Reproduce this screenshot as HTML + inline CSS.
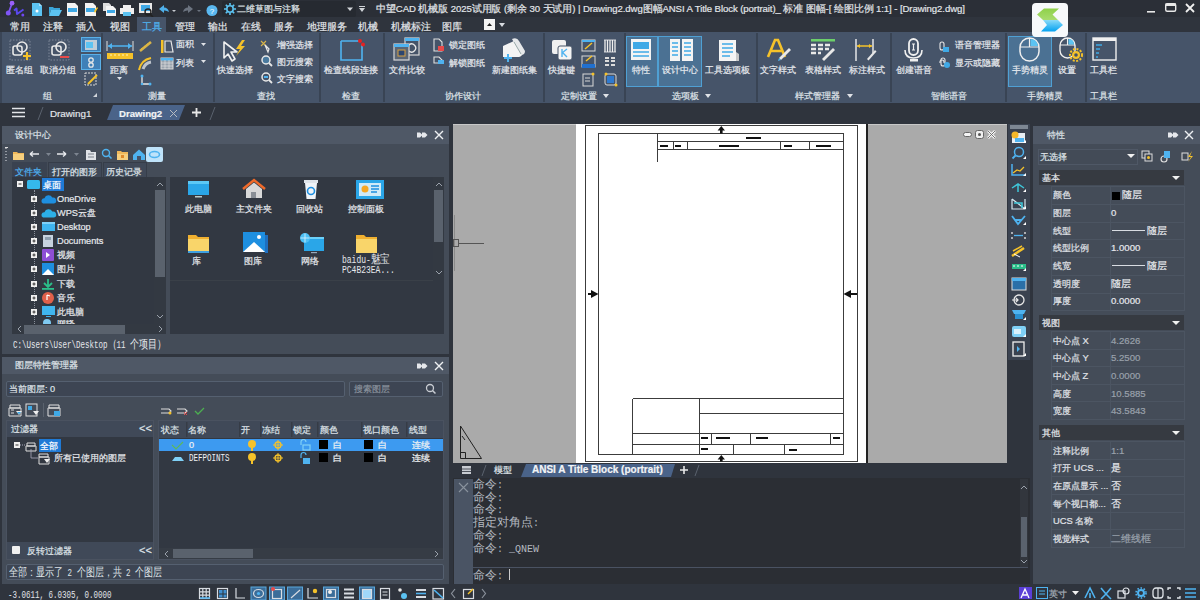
<!DOCTYPE html>
<html><head><meta charset="utf-8">
<style>
*{margin:0;padding:0;box-sizing:border-box}
html,body{width:1200px;height:600px;overflow:hidden;background:#2f343d;font-family:"Liberation Sans",sans-serif;color:#e6e8eb;position:relative;-webkit-text-stroke:0.2px currentColor}
.a{position:absolute}
.t{position:absolute;white-space:nowrap;font-size:9.2px;line-height:12px}
#title{left:0;top:0;width:1200px;height:17px;background:#2b2f37}
.tab{top:21px;color:#e2e5e9;font-size:10px}
#ribbon{left:0;top:32px;width:1200px;height:71px;background:#465469}
#doctabs{left:0;top:103px;width:1200px;height:21px;background:#2f343d}
.sep{position:absolute;top:33px;width:2px;height:69px;background:#394454}
.hl{background:#4b7193;border:1px solid #4fa0d4}
.glabel{position:absolute;top:90px;font-size:9.2px;line-height:12px;color:#dfe3e8;white-space:nowrap}
.blabel{position:absolute;top:64px;font-size:9.2px;line-height:12px;color:#e6e9ee;white-space:nowrap}
.slabel{position:absolute;font-size:9.2px;line-height:12px;color:#e6e9ee;white-space:nowrap}
.panel{position:absolute;background:#444c58}
.phead{position:absolute;background:#4f5866;height:18px}
.tree{color:#e6e8ec}
.fl{color:#e6e8ec}
.lh{top:424px;color:#dfe3e8}
.lr{color:#f0f2f4}
.cmd{font-family:"Liberation Mono",monospace;font-size:10px;line-height:12.7px;color:#b4b9c0;white-space:nowrap}
.cmd .c{font-size:12px;font-family:"Liberation Serif",serif}
.cmd,.ss{-webkit-text-stroke:0}
.ss{font-family:"Liberation Mono",monospace;font-size:10px;transform:scaleX(.75);transform-origin:0 0}
.ss .cj{font-size:12px}
.sech{position:absolute;left:1039px;width:145px;height:15px;background:#363a41;font-size:9.4px;line-height:15px;padding-left:3px;color:#e6e8ec}
.pn{position:absolute;left:1053px;font-size:9.4px;line-height:12px;color:#e0e3e8;white-space:nowrap}
.pv{position:absolute;left:1111px;font-size:9.6px;line-height:12px;color:#e6e8ec;white-space:nowrap}
.pv.g{color:#9aa1ab}
</style></head><body>
<!-- ===== TITLE BAR ===== -->
<div id="title" class="a"></div>
<svg class="a" style="left:0;top:0" width="30" height="18" viewBox="0 0 30 18">
 <path d="M12 3.5 L8.5 13" stroke="#7f55f5" stroke-width="1.8" fill="none"/>
 <circle cx="12" cy="3.2" r="2.4" fill="#9a60fa"/><circle cx="8.3" cy="13" r="2.5" fill="#7f55f5"/>
 <path d="M14 10.5 L16.5 8.5 L17 14 L23.5 9.5" stroke="#5a48ee" stroke-width="2" fill="none" stroke-linejoin="round"/>
 <circle cx="22.8" cy="15" r="1.5" fill="#7048f0"/>
</svg>
<!-- qat icons -->
<svg class="a" style="left:31px;top:2px" width="170" height="15" viewBox="0 0 170 15">
 <path d="M1 1h7l3 3v10H1z" fill="#5cc3f2"/><path d="M8 1v3h3" fill="#a6e0fb"/><circle cx="6" cy="9" r="1.5" fill="#fff"/>
 <path d="M18 5h4l1 1h6v2h-9l-2 6z" fill="#3aa4d8"/><path d="M20 8h11l-3 6H18z" fill="#5cc3f2"/>
 <path d="M36 1h8l3 3v10H36z" fill="#f4f4f4"/><rect x="37" y="6" width="9" height="4" fill="#3fa9e6"/>
 <path d="M54 1h8l3 3v10H54z" fill="#f4f4f4"/><rect x="55" y="6" width="9" height="4" fill="#3fa9e6"/><path d="M63 9l3-4 1 1-3 5z" fill="#f5c22a"/>
 <path d="M72 1h6l2 2v6h-8z" fill="#ddd"/><path d="M75 4h7l3 3v7H75z" fill="#f4f4f4"/><rect x="76" y="8" width="8" height="3" fill="#3fa9e6"/>
 <path d="M92 3h8v3h-8z" fill="#f0f0f0"/><path d="M89 6h14v6H89z" fill="#f0f0f0"/><rect x="92" y="10" width="8" height="4" fill="#5cc3f2"/>
 <rect x="108" y="1" width="13" height="10" fill="#e8e8e8"/><rect x="110" y="3" width="9" height="6" fill="#3fa9e6"/><circle cx="117" cy="10" r="3" stroke="#222" stroke-width="1.4" fill="none"/><path d="M119 12l3 3" stroke="#222" stroke-width="1.6"/>
</svg>
<svg class="a" style="left:155px;top:3px" width="65" height="14" viewBox="0 0 65 14">
 <path d="M4 6 L9 2 L9 4.5 Q13 4.5 14 9 Q11 7 9 7.5 L9 10z" fill="#4fb0ea"/>
 <path d="M17 7l2 2 2-2z" fill="#c8ccd2"/>
 <path d="M38 6 L33 2 L33 4.5 Q29 4.5 28 9 Q31 7 33 7.5 L33 10z" fill="#6c7480"/>
 <path d="M42 7l2 2 2-2z" fill="#6c7480"/>
 <circle cx="57" cy="7.5" r="5.5" fill="#5ab8f0"/><text x="57" y="10.5" font-size="8" fill="#fff" text-anchor="middle" font-family="Liberation Sans">?</text>
</svg>
<div class="a" style="left:222px;top:1px;width:134px;height:16px;background:#262a31;border-radius:2px"></div>
<svg class="a" style="left:224px;top:3px" width="12" height="12" viewBox="0 0 12 12"><circle cx="6" cy="6" r="3.2" stroke="#5cc3f2" stroke-width="1.6" fill="none"/><path d="M6 0v2.3M6 9.7V12M0 6h2.3M9.7 6H12M1.8 1.8l1.6 1.6M8.6 8.6l1.6 1.6M1.8 10.2l1.6-1.6M8.6 3.4l1.6-1.6" stroke="#5cc3f2" stroke-width="1.6"/></svg>
<div class="t" style="left:237px;top:3px;color:#dfe2e6">二维草图与注释</div>
<svg class="a" style="left:346px;top:5px" width="24" height="9" viewBox="0 0 24 9"><path d="M1 2.5h6l-3 3.5z" fill="#d0d3d8"/><path d="M13 3h6l-3 4z" fill="#d0d3d8"/><rect x="13" y="1" width="6" height="1" fill="#d0d3d8"/></svg>
<div class="t" id="ttl" style="left:376px;top:3px;color:#e2e5e9;font-size:9.6px;letter-spacing:-0.09px">中望CAD 机械版 2025试用版 (剩余 30 天试用) | Drawing2.dwg图幅ANSI A Title Block (portrait)_ 标准 图幅-[ 绘图比例 1:1] - [Drawing2.dwg]</div>
<!-- window controls -->
<svg class="a" style="left:1140px;top:2px" width="60" height="14" viewBox="0 0 60 14">
 <rect x="7" y="9" width="8" height="1.6" fill="#e8e8e8"/>
 <rect x="25.7" y="1.7" width="10" height="7.5" rx="1.5" stroke="#e8e8e8" stroke-width="1.4" fill="none"/><rect x="25.5" y="1.5" width="10.5" height="2.5" fill="#e8e8e8"/>
 <path d="M46 2l8 8M54 2l-8 8" stroke="#f0f0f0" stroke-width="1.8"/>
</svg>
<!-- floating app icon -->
<div class="a" style="left:1032px;top:3px;width:36px;height:34px;background:#f7f9fb;border-radius:4px;z-index:10"></div>
<svg class="a" style="left:1032px;top:0px;z-index:11" width="36" height="36" viewBox="1032 0 36 36">
 <defs><linearGradient id="gg" x1="0" y1="0" x2="0" y2="1"><stop offset="0" stop-color="#8fd14a"/><stop offset="1" stop-color="#a8dc6e"/></linearGradient>
 <linearGradient id="bg" x1="0" y1="0" x2="0" y2="1"><stop offset="0" stop-color="#8adaf8"/><stop offset=".45" stop-color="#4cc0f5"/><stop offset="1" stop-color="#05a2f0"/></linearGradient></defs>
 <path d="M1044 8.5H1059L1052.5 14.5L1058 20H1043L1037 14.5z" fill="url(#gg)"/>
 <path d="M1043 20H1058L1063 25L1055 31.5H1041L1047 25z" fill="url(#bg)"/>
</svg>

<!-- ===== RIBBON TABS ===== -->
<div class="a" style="left:137px;top:17px;width:29px;height:16px;background:#465469"></div>
<div class="t tab" style="left:10px">常用</div>
<div class="t tab" style="left:43px">注释</div>
<div class="t tab" style="left:76px">插入</div>
<div class="t tab" style="left:110px">视图</div>
<div class="t tab" style="left:142px;color:#4fb3f0">工具</div>
<div class="t tab" style="left:175px">管理</div>
<div class="t tab" style="left:208px">输出</div>
<div class="t tab" style="left:241px">在线</div>
<div class="t tab" style="left:274px">服务</div>
<div class="t tab" style="left:307px">地理服务</div>
<div class="t tab" style="left:358px">机械</div>
<div class="t tab" style="left:391px">机械标注</div>
<div class="t tab" style="left:442px">图库</div>
<div class="a" style="left:484px;top:19px;width:11px;height:11px;background:#f4f4f4"></div>
<svg class="a" style="left:484px;top:19px" width="22" height="11"><path d="M3 7l2.5-3 2.5 3z" fill="#222"/><path d="M15 4h6l-3 4z" fill="#d8dbe0"/></svg>
<!-- ===== RIBBON ===== -->
<div id="ribbon" class="a"></div>
<div class="a" style="left:0;top:32px;width:2px;height:71px;background:#3a4556"></div>
<div class="sep" style="left:101px"></div>
<div class="sep" style="left:213px"></div>
<div class="sep" style="left:319px"></div>
<div class="sep" style="left:383px"></div>
<div class="sep" style="left:543px"></div>
<div class="sep" style="left:624px"></div>
<div class="sep" style="left:756px"></div>
<div class="sep" style="left:890px"></div>
<div class="sep" style="left:1005px"></div>
<div class="sep" style="left:1085px"></div>
<!-- highlight buttons -->
<div class="a hl" style="left:81px;top:37px;width:20px;height:15px;background:#3f80b8;border-color:#5ab0e8"></div>
<div class="a hl" style="left:81px;top:54px;width:20px;height:16px;background:#3f80b8;border-color:#5ab0e8"></div>
<div class="a hl" style="left:626px;top:36px;width:76px;height:51px"></div>
<div class="a" style="left:657px;top:37px;width:2px;height:49px;background:#4fa0d4"></div>
<div class="a hl" style="left:1008px;top:36px;width:44px;height:51px"></div>

<!-- group 组 -->
<svg class="a" style="left:8px;top:38px" width="90" height="50" viewBox="0 0 90 50">
 <rect x="2" y="2" width="20" height="20" stroke="#8a94a3" stroke-width="0.8" stroke-dasharray="1.5 1.5" fill="none"/>
 <rect x="5" y="8" width="9" height="9" rx="2" stroke="#e8e8e8" stroke-width="1.6" fill="none"/><circle cx="14" cy="9" r="5" stroke="#e8e8e8" stroke-width="1.6" fill="none"/>
 <path d="M19 14v8M15 18h8" stroke="#f5c22a" stroke-width="2.2"/>
 <rect x="41" y="2" width="20" height="20" stroke="#8a94a3" stroke-width="0.8" stroke-dasharray="1.5 1.5" fill="none"/>
 <rect x="44" y="8" width="9" height="9" rx="2" stroke="#e8e8e8" stroke-width="1.6" fill="none"/><circle cx="53" cy="9" r="5" stroke="#e8e8e8" stroke-width="1.6" fill="none"/>
 <rect x="52" y="18" width="9" height="2" fill="#e84a4a"/>
 <rect x="77" y="2" width="12" height="10" fill="#e0e0e0" opacity=".8"/><rect x="78" y="4" width="7" height="6" fill="#5cc3f2"/>
 <circle cx="83" cy="22" r="2.2" stroke="#e8e8e8" stroke-width="1.3" fill="none"/><circle cx="83" cy="27" r="2.2" stroke="#e8e8e8" stroke-width="1.3" fill="none"/>
 <rect x="77" y="35" width="11" height="12" stroke="#d8d8d8" stroke-width="1" fill="none" stroke-dasharray="2 1"/><path d="M80 46l9-9" stroke="#f5c22a" stroke-width="2"/>
</svg>
<div class="blabel" style="left:6px">匿名组</div>
<div class="blabel" style="left:40px">取消分组</div>
<div class="glabel" style="left:43px">组</div>
<svg class="a" style="left:92px;top:92px" width="6" height="6"><path d="M1 5h4V1z" fill="#d0d4da"/></svg>

<!-- group 测量 -->
<svg class="a" style="left:104px;top:38px" width="105" height="50" viewBox="0 0 105 50">
 <path d="M3 3v10M29 3v10" stroke="#e0e0e0" stroke-width="1"/><path d="M4 8h24" stroke="#4fb3f0" stroke-width="1.5"/><path d="M4 8l4-3v6zM28 8l-4-3v6z" fill="#4fb3f0"/>
 <rect x="3" y="15" width="26" height="6" fill="#f5c22a"/><path d="M7 16v2M11 16v2M15 16v2M19 16v2M23 16v2" stroke="#fff3c0" stroke-width="1"/>
 <path d="M36 13l11-9" stroke="#d8b44a" stroke-width="2.5"/><path d="M37 11l9-7" stroke="#f5c22a" stroke-width="1" stroke-dasharray="1 1"/>
 <path d="M35 32 Q37 22 47 20" stroke="#f5c22a" stroke-width="2" fill="none"/><path d="M39 31 Q41 25 47 24" stroke="#bfc5cc" stroke-width="3" fill="none"/>
 <path d="M38 38v8h8" stroke="#e8e8e8" stroke-width="1.3" fill="none"/><circle cx="38" cy="38" r="1.5" fill="#4fb3f0"/><circle cx="46" cy="46" r="1.5" fill="#4fb3f0"/><circle cx="38" cy="46" r="1.3" fill="#4fb3f0"/>
 <rect x="57" y="2" width="2.5" height="13" fill="#f5c22a"/><path d="M61 3h6l2 11h-8z" stroke="#e8e8e8" stroke-width="1.2" fill="none"/>
 <rect x="57" y="20" width="12" height="11" stroke="#d8d8d8" stroke-width="1" fill="#9aa3ad"/><rect x="57" y="20" width="12" height="2.5" fill="#4fb3f0"/><path d="M57 25h12M57 28h12M61 22v9M65 22v9" stroke="#e8e8e8" stroke-width=".6"/>
 <path d="M97 5h5l-2.5 3z" fill="#e0e3e8"/><path d="M97 22h5l-2.5 3z" fill="#e0e3e8"/>
 <path d="M13 39h5l-2.5 3z" fill="#e0e3e8"/>
</svg>
<div class="blabel" style="left:110px">距离</div>
<div class="slabel" style="left:176px;top:38px">面积</div>
<div class="slabel" style="left:176px;top:57px">列表</div>
<div class="glabel" style="left:148px">测量</div>

<!-- group 查找 -->
<svg class="a" style="left:221px;top:38px" width="95" height="50" viewBox="0 0 95 50">
 <path d="M3 4 L3 20 L7 16 L11 23 L14 21 L10 14 L16 14z" stroke="#f0f0f0" stroke-width="1.6" fill="#465469" stroke-linejoin="round"/>
 <path d="M21 2 L15 11 L19 11 L15 18 L24 8 L20 8 L24 2z" fill="#f5c22a"/>
 <path d="M40 3l5 5M45 3l-5 5" stroke="#d8b44a" stroke-width="1.1"/><path d="M44 7l4 4-1 3z" stroke="#e8e8e8" stroke-width="1.2" fill="none"/>
 <circle cx="45" cy="22" r="4" stroke="#e8e8e8" stroke-width="1.5" fill="#4fb3f0" fill-opacity=".4"/><path d="M48 25l3 3" stroke="#e8e8e8" stroke-width="1.8"/>
 <circle cx="45" cy="39" r="4" stroke="#e8e8e8" stroke-width="1.5" fill="none"/><path d="M43 39h4" stroke="#4fb3f0" stroke-width="2"/><path d="M48 42l3 3" stroke="#e8e8e8" stroke-width="1.8"/>
</svg>
<div class="blabel" style="left:217px">快速选择</div>
<div class="slabel" style="left:277px;top:39px">增强选择</div>
<div class="slabel" style="left:277px;top:56px">图元搜索</div>
<div class="slabel" style="left:277px;top:73px">文字搜索</div>
<div class="glabel" style="left:257px">查找</div>

<!-- group 检查 -->
<svg class="a" style="left:338px;top:38px" width="30" height="25" viewBox="0 0 30 25">
 <path d="M3 3h18M24 6v16H3V3" stroke="#4fb3f0" stroke-width="1.6" fill="none"/>
 <circle cx="22" cy="3" r="2" fill="#e82020"/><circle cx="25" cy="6.5" r="2" fill="#e82020"/>
</svg>
<div class="blabel" style="left:324px">检查线段连接</div>
<div class="glabel" style="left:342px">检查</div>

<!-- group 协作设计 -->
<svg class="a" style="left:390px;top:36px" width="145" height="28" viewBox="0 0 145 28">
 <rect x="15" y="2" width="14" height="17" stroke="#d8d8d8" stroke-width="1.2" fill="#465469"/><rect x="15" y="2" width="14" height="3" fill="#4fb3f0"/><path d="M19 9a4 4 0 1 1 0 6" stroke="#e8e8e8" stroke-width="1.3" fill="none"/>
 <rect x="4" y="8" width="15" height="16" stroke="#d8d8d8" stroke-width="1.2" fill="#5b6675"/><rect x="4" y="8" width="15" height="3" fill="#4fb3f0"/><rect x="8" y="14" width="7" height="6" stroke="#d8a040" stroke-width="1" fill="#2c4670"/>
 <path d="M44 3h5l3 3v9h-8z" stroke="#e0e0e0" stroke-width="1.1" fill="none"/><rect x="48" y="10" width="6" height="5" fill="#e84a4a"/>
 <path d="M44 21h5l3 3v3h-8z" stroke="#e0e0e0" stroke-width="1.1" fill="none"/><rect x="48" y="24" width="6" height="4" fill="#4fb3f0"/>
 <path d="M113 10 L124 5 L132 17 Q133 20 129 21 L113 21z" fill="#f4f4f4"/><path d="M122 3 Q127 1 129 5 L135 15 Q135 19 131 19z" fill="#e6e8ea"/><path d="M124 6 L131 18" stroke="#9aa" stroke-width="1" fill="none"/><path d="M118 18v8M114 22h8" stroke="#4fb3f0" stroke-width="2"/>
</svg>
<div class="blabel" style="left:389px">文件比较</div>
<div class="slabel" style="left:449px;top:39px">锁定图纸</div>
<div class="slabel" style="left:449px;top:57px">解锁图纸</div>
<div class="blabel" style="left:492px">新建图纸集</div>
<div class="glabel" style="left:445px">协作设计</div>

<!-- group 定制设置 -->
<svg class="a" style="left:549px;top:37px" width="72" height="50" viewBox="0 0 72 50">
 <rect x="3" y="3" width="14" height="14" rx="2" fill="#f0f0f0"/><rect x="9" y="9" width="14" height="14" rx="2" fill="#f4f4f4" stroke="#465469" stroke-width="1"/><path d="M13 12v8M13 16l5-4M14 16l4 4" stroke="#4fb3f0" stroke-width="1.4"/>
 <rect x="33" y="3" width="13" height="11" stroke="#d8d8d8" stroke-width="1" fill="none"/><rect x="33" y="3" width="13" height="2" fill="#4fb3f0"/><path d="M36 12l7-6" stroke="#f5c22a" stroke-width="1.5"/>
 <rect x="33" y="19" width="13" height="11" stroke="#d8d8d8" stroke-width="1" fill="none"/><rect x="33" y="27" width="13" height="4" fill="#2070d0"/><path d="M37 24l6-5" stroke="#f5c22a" stroke-width="1.5"/>
 <rect x="34" y="37" width="10" height="12" stroke="#d8d8d8" stroke-width="1" fill="none"/><path d="M36 41h5M36 44h5" stroke="#d8d8d8" stroke-width="1"/><circle cx="44" cy="37" r="1.5" fill="#f5c22a"/>
 <path d="M56 3v12M58.5 3v12M61 3v12M63.5 3v12M66 3v12" stroke="#f0f0f0" stroke-width="1.3"/><path d="M55 3h12M55 15h12" stroke="#f0f0f0" stroke-width=".8"/>
 <path d="M56 21h4M62 21h4M56 24h4M62 24h4M56 28h4M62 28h4" stroke="#dcdcdc" stroke-width="1.8"/>
 <rect x="56" y="37" width="11" height="11" rx="2" stroke="#d8d8d8" stroke-width="1" fill="none"/><rect x="58" y="39" width="7" height="7" fill="#2f7ad0"/><circle cx="57" cy="37" r="1.5" fill="#f5c22a"/><circle cx="67" cy="48" r="1.5" fill="#f5c22a"/>
</svg>
<div class="blabel" style="left:548px">快捷键</div>
<div class="glabel" style="left:561px">定制设置</div>
<svg class="a" style="left:602px;top:93px" width="8" height="6"><path d="M1 1h6l-3 4z" fill="#e0e3e8"/></svg>

<!-- group 选项板 -->
<svg class="a" style="left:630px;top:38px" width="125" height="25" viewBox="0 0 125 25">
 <rect x="1" y="1" width="20" height="21" fill="#f4f4f4"/><rect x="3" y="4" width="16" height="7" fill="#3fa9e6"/><path d="M3 14h16M3 18h16" stroke="#3fa9e6" stroke-width="1.4"/>
 <rect x="40" y="1" width="10" height="22" fill="#f4f4f4"/><rect x="52" y="1" width="11" height="22" fill="#f4f4f4"/><path d="M42 5h6M42 9h6M42 13h6M42 17h6M54 5h7M54 9h7M54 13h7M54 17h7" stroke="#3fa9e6" stroke-width="1.3"/>
 <rect x="89" y="2" width="17" height="21" fill="#f4f4f4"/><path d="M92 6h11M92 10h11M92 14h11M92 18h8" stroke="#3fa9e6" stroke-width="1.3"/><path d="M106 14l3 2v7h-3z" fill="#c8c8c8"/>
</svg>
<div class="blabel" style="left:632px">特性</div>
<div class="blabel" style="left:662px">设计中心</div>
<div class="blabel" style="left:705px">工具选项板</div>
<div class="glabel" style="left:672px">选项板</div>
<svg class="a" style="left:704px;top:93px" width="8" height="6"><path d="M1 1h6l-3 4z" fill="#e0e3e8"/></svg>

<!-- group 样式管理器 -->
<svg class="a" style="left:765px;top:37px" width="120" height="26" viewBox="0 0 120 26">
 <path d="M3 20 L10 3 L13 3 L20 20 M6 14h11" stroke="#f5c22a" stroke-width="2.6" fill="none"/><path d="M14 21l10-10 2 2-10 10z" fill="#e8e8e8"/><path d="M14 21l-1 3 3-1z" fill="#4fb3f0"/>
 <rect x="46" y="2" width="24" height="2.5" fill="#6ccf6a"/><path d="M46 8h5M53 8h5M60 8h5M46 12h5M53 12h5M60 12h4M46 16h5M53 16h3" stroke="#e8e8e8" stroke-width="2.5"/><path d="M57 22l11-11 2 2-11 11z" fill="#e8e8e8"/>
 <path d="M91 2v22M108 2v14" stroke="#f0f0f0" stroke-width="1.4"/><path d="M92 9h15" stroke="#f5c22a" stroke-width="1.5"/><path d="M92 9l3-2v4zM107 9l-3-2v4z" fill="#f5c22a"/><path d="M102 22l8-9 1.5 1.5-8 9z" fill="#e8e8e8"/>
</svg>
<div class="blabel" style="left:760px">文字样式</div>
<div class="blabel" style="left:805px">表格样式</div>
<div class="blabel" style="left:849px">标注样式</div>
<div class="glabel" style="left:795px">样式管理器</div>
<svg class="a" style="left:846px;top:93px" width="8" height="6"><path d="M1 1h6l-3 4z" fill="#e0e3e8"/></svg>

<!-- group 智能语音 -->
<svg class="a" style="left:900px;top:37px" width="60" height="26" viewBox="0 0 60 26">
 <rect x="9" y="2" width="9" height="16" rx="4.5" stroke="#f0f0f0" stroke-width="1.8" fill="none"/><path d="M12 7h3M13.5 7v6M12 13h3" stroke="#f0f0f0" stroke-width="1.2"/>
 <path d="M5 13 Q5 21 13.5 21 Q22 21 22 13" stroke="#f0f0f0" stroke-width="1.6" fill="none"/><rect x="10" y="22" width="8" height="2.5" fill="#f0f0f0"/>
 <rect x="40" y="5" width="4" height="8" rx="2" stroke="#e8e8e8" stroke-width="1.1" fill="none"/><rect x="43" y="10" width="6" height="5" fill="#3fa9e6"/>
 <rect x="40" y="23" width="4" height="8" rx="2" stroke="#e8e8e8" stroke-width="1.1" fill="none"/>
</svg>
<svg class="a" style="left:940px;top:57px" width="12" height="12"><rect x="1" y="1" width="4" height="8" rx="2" stroke="#e8e8e8" stroke-width="1.1" fill="none"/><circle cx="7" cy="8" r="3" fill="#3fa9e6"/></svg>
<div class="blabel" style="left:896px">创建语音</div>
<div class="slabel" style="left:955px;top:39px">语音管理器</div>
<div class="slabel" style="left:955px;top:57px">显示或隐藏</div>
<div class="glabel" style="left:931px">智能语音</div>

<!-- group 手势精灵 -->
<svg class="a" style="left:1018px;top:36px" width="110" height="28" viewBox="0 0 110 28">
 <rect x="2" y="2" width="19" height="23" rx="9.5" stroke="#f0f0f0" stroke-width="1.5" fill="none"/><path d="M11.5 2v9M2 11h19" stroke="#f0f0f0" stroke-width="1.2"/><path d="M12.5 3 Q19 3 20 10 L12.5 10z" fill="#5cc3f2"/>
 <rect x="42" y="2" width="15" height="20" rx="7.5" stroke="#f0f0f0" stroke-width="1.4" fill="none"/><path d="M49.5 2v7M42 9h15" stroke="#f0f0f0" stroke-width="1.1"/><path d="M50.5 3 Q56 3 56 8.5 L50.5 8.5z" fill="#5cc3f2"/>
 <circle cx="58" cy="19" r="4" fill="#f5c22a"/><circle cx="58" cy="19" r="6" stroke="#f5c22a" stroke-width="2" stroke-dasharray="2 1.5" fill="none"/><circle cx="58" cy="19" r="1.8" fill="#465469"/>
 <rect x="75" y="2" width="23" height="22" stroke="#f0f0f0" stroke-width="1.4" fill="none"/><rect x="75" y="2" width="23" height="3" fill="#f0f0f0"/><path d="M78 9h6M78 13h4M78 17h3M78 21h2" stroke="#3fa9e6" stroke-width="1.6"/>
</svg>
<div class="blabel" style="left:1012px">手势精灵</div>
<div class="blabel" style="left:1058px">设置</div>
<div class="blabel" style="left:1090px">工具栏</div>
<div class="glabel" style="left:1027px">手势精灵</div>
<div class="glabel" style="left:1090px">工具栏</div>
<!-- ===== DOC TABS ===== -->
<div id="doctabs" class="a"></div>
<svg class="a" style="left:11px;top:107px" width="16" height="12"><path d="M1 1.5h13M1 5.5h13M1 9.5h13" stroke="#e4e6ea" stroke-width="1.6"/></svg>
<svg class="a" style="left:36px;top:105px" width="10" height="16"><path d="M7 2L2 15" stroke="#5a626e" stroke-width="1"/></svg>
<div class="t" style="left:50px;top:108px;font-size:9.8px;color:#e2e5e9">Drawing1</div>
<svg class="a" style="left:106px;top:104px" width="82" height="17"><path d="M7 1H79L73 16H1z" fill="#4a6389"/></svg>
<div class="t" style="left:119px;top:108px;font-size:9.6px;font-weight:bold;color:#f2f4f6">Drawing2</div>
<svg class="a" style="left:169px;top:109px" width="9" height="9"><path d="M1 1l7 7M8 1l-7 7" stroke="#b8bcc2" stroke-width="1"/></svg>
<svg class="a" style="left:191px;top:107px" width="11" height="11"><path d="M5.5 1v9M1 5.5h9" stroke="#e8e8e8" stroke-width="1.8"/></svg>
<svg class="a" style="left:208px;top:105px" width="10" height="16"><path d="M7 2L2 15" stroke="#5a626e" stroke-width="1"/></svg>

<!-- ===== DESIGN CENTER ===== -->
<div class="a" style="left:0;top:124px;width:2px;height:460px;background:#2f343d"></div>
<div class="panel" style="left:2px;top:126px;width:447px;height:228px"></div>
<div class="phead" style="left:2px;top:126px;width:447px"></div>
<div class="t" style="left:15px;top:129px;color:#dfe3e8">设计中心</div>
<svg class="a" style="left:415px;top:129px" width="30" height="12"><path d="M2 3.5h3l2.5 2.5-2.5 2.5H2zM7 3.5h3l2.5 2.5L10 8.5H7z" fill="#e6e8ec"/><path d="M20 2l8 8M28 2l-8 8" stroke="#eef0f2" stroke-width="1.4"/></svg>
<!-- toolbar -->
<svg class="a" style="left:4px;top:146px" width="162" height="16" viewBox="0 0 162 16">
 <path d="M2 2v1M2 5v1M2 8v1M2 11v1M2 14v1" stroke="#c8ccd2" stroke-width="1.2"/><rect x="1" y="1" width="3" height="1" fill="#ddd"/>
 <path d="M9 6h4l1 1h6v7H9z" fill="#f0b85a"/><path d="M9 8h11v6H9z" fill="#f7cf7d"/>
 <path d="M26 8h9M26 8l3-2.5M26 8l3 2.5" stroke="#e6e8ec" stroke-width="1.4" fill="none"/><path d="M42 7h5l-2.5 3z" fill="#7d8590"/>
 <path d="M53 8h9M62 8l-3-2.5M62 8l-3 2.5" stroke="#e6e8ec" stroke-width="1.4" fill="none"/><path d="M70 7h5l-2.5 3z" fill="#7d8590"/>
 <path d="M82 4h4l1 2h5v8H82z" fill="#dfe2e6"/><path d="M84 8h6M84 11h6" stroke="#5b6470" stroke-width="0.8"/>
 <circle cx="102" cy="7" r="3.5" stroke="#4fb3f0" stroke-width="1.4" fill="none"/><path d="M104.5 9.5l3 3" stroke="#4fb3f0" stroke-width="1.6"/>
 <path d="M113 5h4l1 1h6v8H113z" fill="#f0b85a"/><path d="M113 8h11v6H113z" fill="#f7cf7d"/><path d="M117 9h3v3h-3z" fill="#e08a2a"/>
 <path d="M129 9l6-5.5 6 5.5v5h-12z" fill="#4fb3f0"/><rect x="133" y="10" width="4" height="4" fill="#465469"/>
 <rect x="142" y="1" width="17" height="15" rx="2" fill="#bfe3fa"/><ellipse cx="150.5" cy="8.5" rx="5" ry="3" stroke="#4fb3f0" stroke-width="1.6" fill="none"/>
</svg>
<!-- tabs -->
<div class="a" style="left:12px;top:162px;width:35px;height:16px;background:#3a4250"></div>
<div class="a" style="left:48px;top:162px;width:54px;height:16px;background:#404958;border:1px solid #363d49"></div>
<div class="a" style="left:103px;top:162px;width:44px;height:16px;background:#404958;border:1px solid #363d49"></div>
<div class="t" style="left:15px;top:166px;color:#4fb3f0">文件夹</div>
<div class="t" style="left:52px;top:166px;color:#dfe3e8">打开的图形</div>
<div class="t" style="left:106px;top:166px;color:#dfe3e8">历史记录</div>
<!-- tree -->
<div class="a" style="left:12px;top:177px;width:154px;height:157px;background:#323842"></div>
<div class="a" style="left:154px;top:177px;width:12px;height:147px;background:#333942"></div>
<div class="a" style="left:155px;top:190px;width:10px;height:87px;background:#5a626d"></div>
<svg class="a" style="left:155px;top:180px" width="10" height="144"><path d="M2 6l3-3 3 3" stroke="#9aa1ab" stroke-width="1" fill="none"/><path d="M2 135l3 3 3-3" stroke="#9aa1ab" stroke-width="1" fill="none"/></svg>
<div class="a" style="left:12px;top:324px;width:154px;height:10px;background:#333942"></div>
<div class="a" style="left:24px;top:325px;width:101px;height:9px;background:#5a626d"></div>
<svg class="a" style="left:14px;top:324px" width="152" height="10"><path d="M7 2l-3 3 3 3" stroke="#9aa1ab" stroke-width="1" fill="none"/><path d="M145 2l3 3-3 3" stroke="#9aa1ab" stroke-width="1" fill="none"/></svg>
<div class="a" style="left:34px;top:190px;width:0;height:134px;border-left:1px dotted #8a919b"></div>
<svg class="a" style="left:14px;top:178px" width="140" height="146" viewBox="0 0 140 146">
 <rect x="3" y="3" width="6" height="6" fill="#f0f0f0"/><path d="M4.5 6h3" stroke="#333" stroke-width="1"/>
 <rect x="13" y="2" width="13" height="9" rx="1.5" fill="#35b8ec"/>
 <g fill="#f0f0f0">
  <rect x="17" y="18" width="6" height="6"/><rect x="17" y="32" width="6" height="6"/><rect x="17" y="46" width="6" height="6"/><rect x="17" y="60" width="6" height="6"/><rect x="17" y="74" width="6" height="6"/><rect x="17" y="88" width="6" height="6"/><rect x="17" y="103" width="6" height="6"/><rect x="17" y="117" width="6" height="6"/><rect x="17" y="131" width="6" height="6"/>
 </g>
 <g stroke="#333" stroke-width="1"><path d="M18.5 21h3M20 19.5v3M18.5 35h3M20 33.5v3M18.5 49h3M20 47.5v3M18.5 63h3M20 61.5v3M18.5 77h3M20 75.5v3M18.5 91h3M20 89.5v3M18.5 106h3M20 104.5v3M18.5 120h3M20 118.5v3M18.5 134h3M20 132.5v3"/></g>
 <path d="M29 25.5a2.8 2.8 0 0 1 1.5-5.3a4.2 4.2 0 0 1 7.8-0.6a3 3 0 0 1 1.7 5.9z" fill="#1e8fe0"/>
 <path d="M29 39.5a2.8 2.8 0 0 1 1.5-5.3a4.2 4.2 0 0 1 7.8-0.6a3 3 0 0 1 1.7 5.9z" fill="#2cb0e8"/>
 <rect x="28" y="44" width="13" height="9" fill="#3fb5ef"/><rect x="28" y="44" width="13" height="2" fill="#7fd0f7"/>
 <rect x="29" y="57" width="10" height="12" fill="#c7d3df"/><rect x="31" y="59" width="6" height="3" fill="#8fa0b0"/>
 <rect x="28" y="71" width="12" height="12" rx="1" fill="#8e4fd6"/><path d="M32 74v6l4-3z" fill="#fff"/>
 <rect x="28" y="85" width="12" height="12" fill="#1e8fe0"/><path d="M28 97l6-6 6 6z" fill="#fff"/>
 <path d="M34 101v8M30 105l4 4 4-4" stroke="#2bbf8a" stroke-width="1.8" fill="none"/><rect x="28" y="110" width="12" height="1.8" fill="#2bbf8a"/>
 <circle cx="34" cy="120" r="6" fill="#e0604a"/><path d="M33 117v5M33 117l3 1" stroke="#fff" stroke-width="1.2"/>
 <rect x="28" y="128" width="13" height="9" fill="#3fb5ef"/><rect x="32" y="138" width="5" height="1" fill="#3fb5ef"/>
 <circle cx="33" cy="145" r="4" fill="#7fc9f0"/>
</svg>
<div class="a" style="left:42px;top:178px;width:22px;height:13px;background:#1f7ad6"></div>
<div class="t" style="left:43px;top:179px;color:#fff">桌面</div>
<div class="t tree" style="left:57px;top:193px">OneDrive</div>
<div class="t tree" style="left:57px;top:207px">WPS云盘</div>
<div class="t tree" style="left:57px;top:221px">Desktop</div>
<div class="t tree" style="left:57px;top:235px">Documents</div>
<div class="t tree" style="left:57px;top:249px">视频</div>
<div class="t tree" style="left:57px;top:263px">图片</div>
<div class="t tree" style="left:57px;top:278px">下载</div>
<div class="t tree" style="left:57px;top:292px">音乐</div>
<div class="t tree" style="left:57px;top:306px">此电脑</div>
<div class="a" style="left:12px;top:320px;width:142px;height:4px;overflow:hidden"><div class="t tree" style="left:45px;top:-3px">网络</div></div>
<!-- file pane -->
<div class="a" style="left:170px;top:177px;width:274px;height:157px;background:#323842"></div>
<div class="a" style="left:170px;top:280px;width:263px;height:1px;background:#3a4048"></div>
<div class="a" style="left:433px;top:177px;width:11px;height:103px;background:#333942"></div>
<div class="a" style="left:434px;top:190px;width:9px;height:52px;background:#5a626d"></div>
<svg class="a" style="left:434px;top:180px" width="10" height="98"><path d="M2 6l3-3 3 3" stroke="#9aa1ab" stroke-width="1" fill="none"/><path d="M2 91l3 3 3-3" stroke="#9aa1ab" stroke-width="1" fill="none"/></svg>
<svg class="a" style="left:170px;top:177px" width="263" height="103" viewBox="0 0 263 103">
 <rect x="18" y="4" width="21" height="14" fill="#2aa6e8"/><rect x="18" y="4" width="21" height="3" fill="#5cc8f5"/><rect x="25" y="19" width="7" height="1.5" fill="#bcc"/>
 <path d="M73 12l11-9 11 9" stroke="#f06a2a" stroke-width="2.5" fill="none"/><path d="M76 12l8-6.5 8 6.5v9H76z" fill="#d8d8d8"/><rect x="81" y="15" width="5" height="6" fill="#8a8f96"/>
 <path d="M135 6h12l-1.5 16h-9z" fill="#f0f4f8"/><rect x="134" y="3" width="14" height="3" fill="#dfe4ea"/><circle cx="141" cy="14" r="3.5" stroke="#1e8fe0" stroke-width="1.6" fill="none"/>
 <rect x="186" y="3" width="28" height="19" fill="#2aa6e8"/><rect x="189" y="6" width="22" height="13" fill="#cfeaf8"/><circle cx="195" cy="12" r="3.5" fill="#f5a623"/><path d="M201 9h8M201 12h8M201 15h6" stroke="#1e8fe0" stroke-width="1.3"/>
 <path d="M18 58h8l2 2h11v16H18z" fill="#f0b030"/><path d="M18 62h21v14H18z" fill="#f9d56a"/><rect x="18" y="74" width="21" height="2" fill="#3fa0e0"/>
 <rect x="73" y="55" width="22" height="20" fill="#1e8fe0"/><path d="M73 75l11-10 11 10z" fill="#fff"/><circle cx="89" cy="60" r="2" fill="#fff"/><rect x="95" y="58" width="3" height="18" fill="#1e6fc0"/>
 <rect x="134" y="60" width="20" height="14" fill="#2aa6e8"/><rect x="134" y="60" width="20" height="2" fill="#6cd0f8"/><rect x="141" y="75" width="6" height="1.2" fill="#9ab"/><circle cx="135" cy="61" r="5" fill="#4cc0f5"/><path d="M130.5 61h9M135 56.5v9" stroke="#e0f4fc" stroke-width=".8"/>
 <path d="M186 58h8l2 2h11v16H186z" fill="#f0b030"/><path d="M186 62h21v14H186z" fill="#f9d56a"/>
</svg>
<div class="t fl" style="left:185px;top:203px">此电脑</div>
<div class="t fl" style="left:236px;top:203px">主文件夹</div>
<div class="t fl" style="left:296px;top:203px">回收站</div>
<div class="t fl" style="left:348px;top:203px">控制面板</div>
<div class="t fl" style="left:192px;top:255px">库</div>
<div class="t fl" style="left:244px;top:255px">图库</div>
<div class="t fl" style="left:301px;top:255px">网络</div>
<div class="t fl ss" style="left:342px;top:256px;line-height:9.5px;transform:scaleX(.8)">baidu-<span class="cj">魅宝</span><br>PC4B23EA...</div>
<div class="t ss" style="left:13px;top:339px;color:#e6e8ec">C:\Users\User\Desktop<span class="cj">（</span>11 <span class="cj">个项目）</span></div>
<div class="a" style="left:2px;top:354px;width:447px;height:3px;background:#2f343d"></div>
<!-- ===== LAYER MANAGER ===== -->
<div class="panel" style="left:2px;top:357px;width:447px;height:227px"></div>
<div class="phead" style="left:2px;top:357px;width:447px;height:17px"></div>
<div class="t" style="left:15px;top:359px;color:#dfe3e8">图层特性管理器</div>
<svg class="a" style="left:415px;top:360px" width="30" height="12"><path d="M2 3.5h3l2.5 2.5-2.5 2.5H2zM7 3.5h3l2.5 2.5L10 8.5H7z" fill="#e6e8ec"/><path d="M20 2l8 8M28 2l-8 8" stroke="#eef0f2" stroke-width="1.4"/></svg>
<div class="a" style="left:6px;top:381px;width:339px;height:16px;background:#3d4553;border:1px solid #556070;border-radius:2px"></div>
<div class="t" style="left:9px;top:383px;color:#dfe3e8">当前图层: 0</div>
<div class="a" style="left:349px;top:381px;width:94px;height:16px;background:#3d4553;border:1px solid #556070;border-radius:2px"></div>
<div class="t" style="left:354px;top:383px;color:#8a929d">搜索图层</div>
<svg class="a" style="left:425px;top:383px" width="12" height="12"><circle cx="5" cy="5" r="3.5" stroke="#c8ccd2" stroke-width="1.3" fill="none"/><path d="M7.5 7.5l3 3" stroke="#c8ccd2" stroke-width="1.5"/></svg>
<svg class="a" style="left:6px;top:401px" width="200" height="17" viewBox="0 0 200 17">
 <path d="M4 4h10v3H4zM3 7h12v8H3z" stroke="#e0e0e0" stroke-width="1" fill="none"/><path d="M5 9h3M5 12h3" stroke="#e0e0e0"/><path d="M10 10h6l-3 4z" fill="#f0f0f0"/><path d="M11 11h4l-2 2.5z" fill="#3fa9e6"/>
 <rect x="20" y="3" width="11" height="12" stroke="#e0e0e0" stroke-width="1" fill="none"/><rect x="22" y="5" width="4" height="4" fill="#3fa9e6"/><path d="M27 10h6l-3 4z" fill="#f0f0f0"/>
 <rect x="37" y="2" width="1" height="14" fill="#5a626d"/>
 <path d="M43 4h10v3H43zM42 7h12v8H42z" stroke="#e0e0e0" stroke-width="1" fill="none"/><rect x="48" y="10" width="6" height="5" fill="#3fa9e6"/>
 <path d="M155 8h8l2 2-2 2h-8" stroke="#dcdcdc" stroke-width="1.2" fill="none"/><circle cx="164" cy="12" r="1.5" fill="#f5c22a"/>
 <path d="M171 8h8l2 2-2 2h-8" stroke="#dcdcdc" stroke-width="1.2" fill="none"/><path d="M178 11l3 3M181 11l-3 3" stroke="#e84a4a" stroke-width="1"/>
 <path d="M189 10l3 3 6-6" stroke="#4caf50" stroke-width="1.3" fill="none"/>
</svg>
<!-- filter pane -->
<div class="a" style="left:6px;top:420px;width:148px;height:140px;background:#323842;border:1px solid #4a5260"></div>
<div class="a" style="left:7px;top:421px;width:146px;height:16px;background:#404958"></div>
<div class="t" style="left:11px;top:423px;color:#dfe3e8">过滤器</div>
<div class="t" style="left:139px;top:422px;color:#dfe3e8;font-size:11px">&lt;&lt;</div>
<svg class="a" style="left:12px;top:440px" width="70" height="26" viewBox="0 0 70 26">
 <rect x="2" y="2" width="6" height="6" fill="#f0f0f0"/><path d="M3.5 5h3" stroke="#333"/><path d="M8 5h5" stroke="#aab" stroke-dasharray="1 1"/>
 <path d="M15 3h8v3h-8zM14 6h10v5H14z" stroke="#dcdcdc" stroke-width="1" fill="none"/>
 <path d="M19 9v9h7" stroke="#aab" stroke-width="0.8" fill="none"/>
 <path d="M27 14h9v3h-9zM27 17h10v7H27z" stroke="#dcdcdc" stroke-width="1" fill="none"/><path d="M32 19h6l-3 4z" fill="#f0f0f0"/>
</svg>
<div class="a" style="left:39px;top:439px;width:22px;height:13px;background:#1f7ad6"></div>
<div class="t" style="left:40px;top:440px;color:#fff">全部</div>
<div class="t" style="left:54px;top:452px;color:#e6e8ec">所有已使用的图层</div>
<div class="a" style="left:7px;top:542px;width:146px;height:17px;background:#404958"></div>
<div class="a" style="left:12px;top:546px;width:8px;height:8px;background:#f0f0f0;border-radius:1px"></div>
<div class="t" style="left:27px;top:545px;color:#dfe3e8">反转过滤器</div>
<div class="t" style="left:139px;top:544px;color:#dfe3e8;font-size:11px">&lt;&lt;</div>
<!-- layer list -->
<div class="a" style="left:158px;top:420px;width:286px;height:140px;background:#323842;border:1px solid #4a5260"></div>
<div class="a" style="left:159px;top:421px;width:284px;height:17px;background:#404958"></div>
<div class="a" style="left:159px;top:439px;width:284px;height:12px;background:#3d9af0"></div>
<div class="a" style="left:159px;top:548px;width:284px;height:11px;background:#363c45"></div>
<div class="a" style="left:173px;top:549px;width:80px;height:9px;background:#5a626d"></div>
<svg class="a" style="left:162px;top:549px" width="10" height="10"><path d="M6 2l-3 3 3 3" stroke="#9aa1ab" stroke-width="1" fill="none"/></svg>
<svg class="a" style="left:432px;top:549px" width="10" height="10"><path d="M3 2l3 3-3 3" stroke="#9aa1ab" stroke-width="1" fill="none"/></svg>
<svg class="a" style="left:159px;top:421px" width="284" height="17"><g fill="#363c46"><rect x="27" y="1" width="1.5" height="15"/><rect x="80" y="1" width="1.5" height="15"/><rect x="101" y="1" width="1.5" height="15"/><rect x="132" y="1" width="1.5" height="15"/><rect x="158" y="1" width="1.5" height="15"/><rect x="202" y="1" width="1.5" height="15"/><rect x="247" y="1" width="1.5" height="15"/></g></svg>
<div class="t lh" style="left:161px">状态</div>
<div class="t lh" style="left:188px">名称</div>
<div class="t lh" style="left:241px">开</div>
<div class="t lh" style="left:262px">冻结</div>
<div class="t lh" style="left:293px">锁定</div>
<div class="t lh" style="left:320px">颜色</div>
<div class="t lh" style="left:363px">视口颜色</div>
<div class="t lh" style="left:409px">线型</div>
<svg class="a" style="left:159px;top:439px" width="284" height="26" viewBox="0 0 284 26">
 <path d="M13 6l4 4 7-7" stroke="#5cb85c" stroke-width="1.2" fill="none"/>
 <path d="M13 22l3-4h6l3 4z" fill="#7fd0f7"/>
 <circle cx="93" cy="5" r="4" fill="#f5c22a"/><rect x="92" y="8" width="2" height="4" fill="#f5c22a"/>
 <circle cx="93" cy="18" r="4" fill="#f5c22a"/><rect x="92" y="21" width="2" height="4" fill="#f5c22a"/>
 <circle cx="119" cy="6" r="3" stroke="#f5c22a" stroke-width="1.3" fill="none"/><path d="M119 1v10M114 6h10" stroke="#f5c22a" stroke-width="1"/>
 <circle cx="119" cy="19" r="3" stroke="#f5c22a" stroke-width="1.3" fill="none"/><path d="M119 14v10M114 19h10" stroke="#f5c22a" stroke-width="1"/>
 <path d="M142 6V3a2.5 2.5 0 0 1 5 0" stroke="#7fd0f7" stroke-width="1.2" fill="none"/><rect x="144" y="6" width="7" height="5" stroke="#7fd0f7" stroke-width="1.2" fill="none"/>
 <path d="M142 19v-3a2.5 2.5 0 0 1 5 0" stroke="#4fb3f0" stroke-width="1.2" fill="none"/><rect x="144" y="19" width="7" height="6" fill="#4fb3f0"/>
 <rect x="160" y="1" width="9" height="9" fill="#000"/><rect x="205" y="1" width="9" height="9" fill="#000"/>
 <rect x="160" y="14" width="9" height="9" fill="#000"/><rect x="205" y="14" width="9" height="9" fill="#000"/>
</svg>
<div class="t lr" style="left:189px;top:439px">0</div>
<div class="t lr" style="left:333px;top:439px">白</div>
<div class="t lr" style="left:378px;top:439px">白</div>
<div class="t lr" style="left:412px;top:439px">连续</div>
<div class="t lr ss" style="left:189px;top:453px">DEFPOINTS</div>
<div class="t lr" style="left:333px;top:452px">白</div>
<div class="t lr" style="left:378px;top:452px">白</div>
<div class="t lr" style="left:412px;top:452px">连续</div>
<div class="a" style="left:6px;top:564px;width:438px;height:16px;background:#3d4553;border:1px solid #556070;border-radius:2px"></div>
<div class="t ss" style="left:9px;top:567px;color:#dfe3e8"><span class="cj">全部：显示了</span> 2 <span class="cj">个图层，共</span> 2 <span class="cj">个图层</span></div>
<!-- ===== DRAWING AREA ===== -->
<div class="a" style="left:449px;top:124px;width:4px;height:460px;background:#2f343d"></div>
<div class="a" style="left:453px;top:124px;width:554px;height:339px;background:#aaaaaa"></div>
<div class="a" style="left:453px;top:124px;width:554px;height:1px;background:#c8c8c8"></div>
<div class="a" style="left:576px;top:124px;width:291px;height:339px;background:#fff"></div>
<div class="a" style="left:866px;top:124px;width:2px;height:339px;background:#222"></div>
<svg class="a" style="left:453px;top:124px" width="554" height="339" viewBox="453 124 554 339">
 <g stroke="#3c3c3c" stroke-width="1" fill="none" shape-rendering="crispEdges">
  <rect x="585.5" y="125.5" width="272" height="336"/>
  <rect x="598.5" y="133.5" width="245" height="321"/>
  <path d="M657.5 133.5v28M657.5 141.5h186M657.5 149.5h186M673.5 141.5v8M687.5 141.5v8M780.5 141.5v8M809.5 141.5v8"/>
  <path d="M632.5 398.5h211M632.5 398.5v56M699.5 398.5v56M699.5 413.5h144M632.5 433.5h211M632.5 444.5h211M711.5 433.5v11M750.5 433.5v11M830.5 433.5v11M733.5 444.5v10M784.5 444.5v10"/>
 </g>
 <g fill="#111">
  <rect x="746" y="137" width="15" height="2"/>
  <rect x="660" y="145" width="8" height="2"/><rect x="675" y="145" width="6" height="2"/><rect x="719" y="145" width="20" height="2"/><rect x="784" y="145" width="8" height="2"/><rect x="816" y="145" width="15" height="2"/>
  <rect x="701" y="437" width="7" height="2"/><rect x="716" y="437" width="14" height="2"/><rect x="756" y="437" width="12" height="2"/><rect x="833" y="437" width="7" height="2"/>
  <rect x="701" y="448" width="7" height="2"/><rect x="789" y="449" width="8" height="2"/>
  <path d="M721.3 126L725 130.5H717.6z"/><rect x="720" y="130" width="2.6" height="3.5"/>
  <path d="M721.3 455L725 459.5H717.6z"/><rect x="720" y="459" width="2.6" height="2.5"/>
  <path d="M598.5 294L591 290v8z"/><rect x="588" y="293" width="4" height="2"/>
  <path d="M843.5 294L851 290v8z"/><rect x="850" y="293" width="7" height="2"/>
 </g>
 <!-- crosshair -->
 <g stroke="#444" stroke-width="1" fill="none">
  <path d="M454.5 215v56" stroke="#8a8a8a"/><rect x="453.5" y="239.5" width="5" height="7" stroke="#555"/><path d="M459 243.5h25" stroke="#555"/>
 </g>
 <!-- UCS icon -->
 <g stroke="#222" stroke-width="1" fill="none">
  <path d="M460.5 426v32.5h21z"/><path d="M460.5 452.5h5v6"/><path d="M462 436l3 4"/>
 </g>
 <!-- viewport controls -->
 <g>
  <rect x="963.5" y="132.5" width="8" height="4" rx="2" fill="#f4f4f4" stroke="#666" stroke-width="1"/>
  <rect x="975.5" y="130.5" width="8" height="8" rx="2" fill="#eee" stroke="#666" stroke-width="1"/><circle cx="979.5" cy="134.5" r="1.5" fill="#555"/>
  <path d="M988 131l7 7M995 131l-7 7" stroke="#f4f4f4" stroke-width="2.6"/><path d="M988 131l7 7M995 131l-7 7" stroke="#666" stroke-width=".9"/>
 </g>
</svg>
<!-- right toolbar -->
<div class="a" style="left:1007px;top:124px;width:26px;height:460px;background:#2f343d"></div>
<div class="a" style="left:1008px;top:124px;width:22px;height:236px;background:#3a4250"></div>
<div class="a" style="left:1010px;top:125px;width:18px;height:4px;background:#7d8793"></div>
<svg class="a" style="left:1008px;top:130px" width="22" height="230" viewBox="0 0 22 230">
 <rect x="4" y="3" width="13" height="10" fill="#e8eef4"/><circle cx="7" cy="5" r="3.5" fill="#f5b82a"/><rect x="7" y="8" width="9" height="4" fill="#4fb3f0"/><path d="M15 13l3-3v3z" fill="#fff"/>
 <circle cx="11" cy="22" r="4.5" stroke="#4fb3f0" stroke-width="1.5" fill="none"/><path d="M7.5 25.5l-3 3" stroke="#4fb3f0" stroke-width="1.8"/><path d="M15 29l3-3v3z" fill="#fff"/>
 <path d="M4 34v11h13" stroke="#4fb3f0" stroke-width="1.5" fill="none"/><path d="M5 43l4-3 3 1 4-4" stroke="#f5c22a" stroke-width="1.3" fill="none"/><path d="M15 46l3-3v3z" fill="#fff"/>
 <path d="M4 58l6-4 6 4M10 54v8" stroke="#3fc5d8" stroke-width="1.5" fill="none"/><path d="M15 62l3-3v3z" fill="#fff"/>
 <path d="M4 69l13 10M4 69v10h13V69" stroke="#d8e8f0" stroke-width="1.2" fill="none"/><path d="M6 73h8v5" stroke="#3fc5d8" stroke-width="1.6" fill="none"/><path d="M15 79l3-3v3z" fill="#fff"/>
 <path d="M4 86l6 8 7-8M7 90h7" stroke="#4fb3f0" stroke-width="1.8" fill="none"/><path d="M15 95l3-3v3z" fill="#fff"/>
 <path d="M4 102v2M4 107v2M17 102v2M17 107v2" stroke="#ddd" stroke-width="1.4"/><path d="M6 105.5h9" stroke="#4fb3f0" stroke-width="1.3"/>
 <path d="M4 126l12-8" stroke="#f5c22a" stroke-width="2.5"/><path d="M5 121l9-5" stroke="#f5c22a" stroke-width="1.5"/><path d="M6 124l6 3" stroke="#fff" stroke-width="1"/>
 <rect x="4" y="134" width="14" height="5" fill="#2bbf8a"/><path d="M5 136h2M9 136h2M13 136h2" stroke="#fff" stroke-width="1"/><path d="M15 141l3-3v3z" fill="#fff"/>
 <rect x="4" y="148" width="14" height="12" stroke="#ddd" stroke-width="1" fill="#2a6fa8"/><rect x="4" y="148" width="14" height="3" fill="#4fb3f0"/>
 <circle cx="11" cy="170" r="5" stroke="#e8e8e8" stroke-width="1.3" fill="none"/><path d="M4 170h6M8 168l2 2-2 2" stroke="#e8e8e8" stroke-width="1.2" fill="none"/>
 <path d="M4 180h14l-2 4H6z" fill="#4fb3f0"/><path d="M7 184h8v5H7z" fill="#2a8fd0"/><path d="M15 190l3-3v3z" fill="#fff"/>
 <rect x="4" y="196" width="14" height="11" rx="2" fill="#7fd0f7"/><rect x="6" y="199" width="7" height="5" fill="#d8f0fc"/><path d="M15 207l3-3v3z" fill="#fff"/>
 <rect x="5" y="212" width="11" height="14" stroke="#eee" stroke-width="1.3" fill="none"/><path d="M9 216l3 3-3 3z" fill="#4fb3f0"/><path d="M15 226l3-3v3z" fill="#fff"/>
</svg>

<!-- layout tabs -->
<div class="a" style="left:453px;top:463px;width:577px;height:15px;background:#2f343d"></div>
<svg class="a" style="left:461px;top:464px" width="12" height="12"><rect x="1" y="2" width="9" height="8" fill="#c8ccd2"/><path d="M1 5h9M1 7.5h9" stroke="#2f343d" stroke-width=".8"/></svg>
<svg class="a" style="left:480px;top:464px" width="8" height="13"><path d="M6 1L2 12" stroke="#5a626e" stroke-width="1"/></svg>
<div class="t" style="left:494px;top:464px;color:#dfe3e8">模型</div>
<svg class="a" style="left:520px;top:463px" width="156" height="15"><path d="M6 1H155L151 14H1z" fill="#4a6389"/></svg>
<div class="t" style="left:532px;top:464px;font-weight:bold;color:#f2f4f6;font-size:10px">ANSI A Title Block (portrait)</div>
<svg class="a" style="left:679px;top:465px" width="10" height="10"><path d="M5 1v8M1 5h8" stroke="#e8e8e8" stroke-width="1.6"/></svg>
<svg class="a" style="left:693px;top:464px" width="8" height="13"><path d="M6 1L2 12" stroke="#5a626e" stroke-width="1"/></svg>

<!-- command -->
<div class="a" style="left:453px;top:478px;width:577px;height:106px;background:#2b2e34"></div>
<div class="a" style="left:454px;top:479px;width:19px;height:105px;background:#4a5464"></div>
<svg class="a" style="left:458px;top:482px" width="11" height="11"><path d="M1 1l9 9M10 1l-9 9" stroke="#8a939e" stroke-width="1.1"/></svg>
<div class="a" style="left:1020px;top:479px;width:8px;height:88px;background:#32363d"></div>
<div class="a" style="left:1021px;top:517px;width:6px;height:40px;background:#5a626d"></div>
<svg class="a" style="left:1020px;top:483px" width="8" height="84"><path d="M1 6l3-3 3 3" stroke="#9aa1ab" stroke-width="1" fill="none"/><path d="M1 77l3 3 3-3" stroke="#9aa1ab" stroke-width="1" fill="none"/></svg>
<div class="a" style="left:473px;top:567px;width:555px;height:1px;background:#4a5262"></div>
<div class="a cmd" style="left:473px;top:478.0px"><span class="c">命令</span>:</div>
<div class="a cmd" style="left:473px;top:490.7px"><span class="c">命令</span>:</div>
<div class="a cmd" style="left:473px;top:503.4px"><span class="c">命令</span>:</div>
<div class="a cmd" style="left:473px;top:516.1px"><span class="c">指定对角点</span>:</div>
<div class="a cmd" style="left:473px;top:528.8px"><span class="c">命令</span>:</div>
<div class="a cmd" style="left:473px;top:541.5px"><span class="c">命令</span>: _QNEW</div>

<div class="a cmd" style="left:473px;top:569px"><span class="c">命令</span>: <span style="display:inline-block;width:1px;height:11px;background:#ccc;vertical-align:-1px"></span></div>
<!-- ===== PROPERTIES ===== -->
<div class="panel" style="left:1033px;top:126px;width:167px;height:458px;background:#444c58"></div>
<div class="phead" style="left:1033px;top:126px;width:167px"></div>
<div class="t" style="left:1047px;top:129px;color:#dfe3e8">特性</div>
<svg class="a" style="left:1166px;top:129px" width="32" height="12"><path d="M2 3.5h3l2.5 2.5-2.5 2.5H2zM7 3.5h3l2.5 2.5L10 8.5H7z" fill="#e6e8ec"/><path d="M19 2l8 8M27 2l-8 8" stroke="#eef0f2" stroke-width="1.4"/></svg>
<div class="a" style="left:1038px;top:149px;width:100px;height:16px;background:#434b57;border:1px solid #4f5866"></div>
<div class="t" style="left:1040px;top:151px;color:#dfe3e8">无选择</div>
<svg class="a" style="left:1126px;top:153px" width="10" height="6"><path d="M1 1h8l-4 4z" fill="#f0f0f0"/></svg>
<svg class="a" style="left:1140px;top:148px" width="60" height="16" viewBox="0 0 60 16">
 <rect x="2" y="3" width="7" height="7" stroke="#ddd" stroke-width="1" fill="none"/><rect x="5" y="6" width="7" height="7" stroke="#ddd" stroke-width="1" fill="#3d4552"/><circle cx="8.5" cy="9.5" r="1.5" fill="#f5c22a"/>
 <circle cx="24" cy="11" r="3" stroke="#ddd" stroke-width="1.2" fill="none"/><rect x="24" y="3" width="6" height="7" fill="#4fb3f0"/>
 <rect x="42" y="5" width="6" height="7" stroke="#ddd" stroke-width="1" fill="none"/><path d="M52 3l-4 6h3l-3 5 5-6h-3z" fill="#f5c22a"/>
</svg>
<div class="sech" style="top:170px">基本</div>
<div class="sech" style="top:315px">视图</div>
<div class="sech" style="top:425px">其他</div>
<svg class="a" style="left:1171px;top:175px" width="10" height="6"><path d="M1 1h8l-4 4z" fill="#f0f0f0"/></svg>
<svg class="a" style="left:1171px;top:320px" width="10" height="6"><path d="M1 1h8l-4 4z" fill="#f0f0f0"/></svg>
<svg class="a" style="left:1171px;top:430px" width="10" height="6"><path d="M1 1h8l-4 4z" fill="#f0f0f0"/></svg>
<!-- rows grid -->
<svg class="a" style="left:1051px;top:186px" width="135" height="362" viewBox="0 0 135 362">
 <g stroke="#4c5562" stroke-width="1" fill="none" shape-rendering="crispEdges">
  <rect x="0.5" y="0.5" width="133" height="124"/><path d="M59.5 0v125M0 18.5h134M0 36.5h134M0 53.5h134M0 71.5h134M0 89.5h134M0 107.5h134"/>
  <rect x="0.5" y="145.5" width="133" height="88"/><path d="M59.5 145v89M0 163.5h134M0 180.5h134M0 198.5h134M0 215.5h134"/>
  <rect x="0.5" y="255.5" width="133" height="106"/><path d="M59.5 255v107M0 273.5h134M0 290.5h134M0 308.5h134M0 326.5h134M0 343.5h134"/>
 </g>
 <rect x="61" y="6" width="8" height="8" fill="#000"/>
 <path d="M61 44.5h33M61 79.5h33" stroke="#d8dce2" stroke-width="1"/>
</svg>
<div class="pn" style="top:189px">颜色</div><div class="pv" style="top:189px;left:1122px">随层</div>
<div class="pn" style="top:207px">图层</div><div class="pv" style="top:207px">0</div>
<div class="pn" style="top:225px">线型</div><div class="pv" style="top:225px;left:1147px">随层</div>
<div class="pn" style="top:242px">线型比例</div><div class="pv" style="top:242px">1.0000</div>
<div class="pn" style="top:260px">线宽</div><div class="pv" style="top:260px;left:1147px">随层</div>
<div class="pn" style="top:278px">透明度</div><div class="pv" style="top:278px">随层</div>
<div class="pn" style="top:295px">厚度</div><div class="pv" style="top:295px">0.0000</div>

<div class="pn" style="top:335px">中心点 X</div><div class="pv g" style="top:335px">4.2626</div>
<div class="pn" style="top:352px">中心点 Y</div><div class="pv g" style="top:352px">5.2500</div>
<div class="pn" style="top:370px">中心点 Z</div><div class="pv g" style="top:370px">0.0000</div>
<div class="pn" style="top:388px">高度</div><div class="pv g" style="top:388px">10.5885</div>
<div class="pn" style="top:405px">宽度</div><div class="pv g" style="top:405px">43.5843</div>

<div class="pn" style="top:445px">注释比例</div><div class="pv g" style="top:445px">1:1</div>
<div class="pn" style="top:462px">打开 UCS ...</div><div class="pv" style="top:462px">是</div>
<div class="pn" style="top:480px">在原点显示 ...</div><div class="pv" style="top:480px">否</div>
<div class="pn" style="top:498px">每个视口都...</div><div class="pv" style="top:498px">否</div>
<div class="pn" style="top:515px">UCS 名称</div>
<div class="pn" style="top:533px">视觉样式</div><div class="pv g" style="top:533px">二维线框</div>

<!-- ===== STATUS BAR ===== -->
<div class="a" style="left:0;top:584px;width:1200px;height:16px;background:#2f343d"></div>
<div class="t ss" style="left:8px;top:590px;color:#e0e3e8">-3.0611, 6.0305, 0.0000</div>
<svg class="a" style="left:195px;top:583px" width="295" height="17" viewBox="195 583 295 17">
 <g fill="#3b6d99" stroke="#5aa7dc" stroke-width="1"><rect x="251" y="587" width="15" height="13"/><rect x="269.5" y="587" width="15" height="13"/><rect x="287.5" y="587" width="15" height="13"/><rect x="323.5" y="587" width="15" height="13"/><rect x="359.5" y="587" width="15" height="13"/></g>
 <g stroke="#d8dce2" stroke-width="1.2" fill="none">
  <rect x="199.5" y="588.5" width="10" height="10"/><path d="M202.8 588.5v10M206.2 588.5v10M199.5 591.8h10M199.5 595.2h10"/>
  <rect x="217.5" y="588.5" width="10" height="10"/>
  <path d="M236 588v10h9"/>
  <ellipse cx="258.5" cy="593.5" rx="5" ry="4"/>
  <rect x="272.5" y="589.5" width="9" height="9"/>
  <path d="M291 598l9-8"/>
  <path d="M308 588v10h10"/>
  <rect x="326.5" y="589.5" width="9" height="8"/>
  <path d="M344 589.5h10M344 593.5h10M344 597.5h10" stroke-width="1.8"/>
  <rect x="362.5" y="589.5" width="9" height="9" fill="#9fd8fa"/>
  <rect x="380.5" y="588.5" width="9" height="11"/><path d="M382.5 592h5M382.5 595h5"/>
  <path d="M416 590h10M416 597h10" stroke-width="1.8"/><path d="M416 593.5h10" stroke="#4fb3f0" stroke-width="1.6"/>
  <rect x="433" y="588.5" width="10.5" height="10.5"/><path d="M434 590l9 8" stroke="#4fb3f0" stroke-width="1.6"/>
  <path d="M455 589l-3.5 4.5 3.5 4.5" stroke="#8a919b"/>
  <rect x="463.5" y="589.5" width="10" height="9"/><path d="M468 594l5-5" stroke="#f5c22a" stroke-width="1.4"/>
  <path d="M482 589l3.5 4.5-3.5 4.5" stroke="#8a919b"/>
 </g>
 <path d="M200 598h10" stroke="#4fb3f0" stroke-width="1.5"/><path d="M219 590h3.5v3.5h-3.5zM223.5 590h3v3.5h-3zM219 594.5h3.5v3h-3.5zM223.5 594.5h3v3h-3z" fill="#3f8fd0"/>
 <circle cx="258.5" cy="593.5" r="1.6" fill="#4fb3f0"/><circle cx="273" cy="589" r="2" fill="#e84a4a"/><circle cx="315" cy="591" r="2.2" fill="#f5c22a"/>
 <circle cx="400" cy="590" r="1.8" fill="#e8e8e8"/><circle cx="404" cy="596" r="3" fill="#5cc3f2"/>
 <circle cx="330" cy="592" r="2" fill="#f0f0f0"/>
</svg>
<svg class="a" style="left:1018px;top:586px" width="182" height="14" viewBox="0 0 182 14">
 <rect x="1" y="1" width="13" height="12" fill="#5b3fd6"/><path d="M3 12l4-9 4 9M5 9h4" stroke="#fff" stroke-width="1.3" fill="none"/>
 <rect x="18.5" y="1.5" width="11" height="11" stroke="#4fb3f0" stroke-width="1" fill="none"/><path d="M21 5h6M21 8h6" stroke="#4fb3f0"/>
 <path d="M54 5h7l-3.5 4z" fill="#f0f0f0"/>
 <path d="M67 12l5-10 5 10M72 7v5" stroke="#4fb3f0" stroke-width="1.6" fill="none"/>
 <path d="M83 2l5 6 5-6M88 8l-5 5M88 8l5 5" stroke="#4fb3f0" stroke-width="1.6" fill="none"/>
 <rect x="100" y="5" width="7" height="7" stroke="#dfe3e8" stroke-width="1.2" fill="none"/><circle cx="108" cy="5" r="3" stroke="#dfe3e8" stroke-width="1.2" fill="none"/>
 <circle cx="123" cy="7" r="3" stroke="#4fb3f0" stroke-width="2" fill="none"/><circle cx="123" cy="7" r="5" stroke="#4fb3f0" stroke-width="1.6" stroke-dasharray="1.6 1.6" fill="none"/>
 <rect x="135" y="2" width="10" height="10" rx="3" stroke="#dfe3e8" stroke-width="1.3" fill="none"/><path d="M140 2v10" stroke="#dfe3e8" stroke-width="1.2"/>
 <path d="M150 4V2h3M159 2h3v2M150 10v2h3M159 12h3v-2" stroke="#dfe3e8" stroke-width="1.3" fill="none"/>
 <path d="M167 3h11M167 7h11M167 11h11" stroke="#4fb3f0" stroke-width="1.6"/>
</svg>
<div class="t" style="left:1049px;top:588px;color:#a8b0ba">英寸</div>
</body></html>
